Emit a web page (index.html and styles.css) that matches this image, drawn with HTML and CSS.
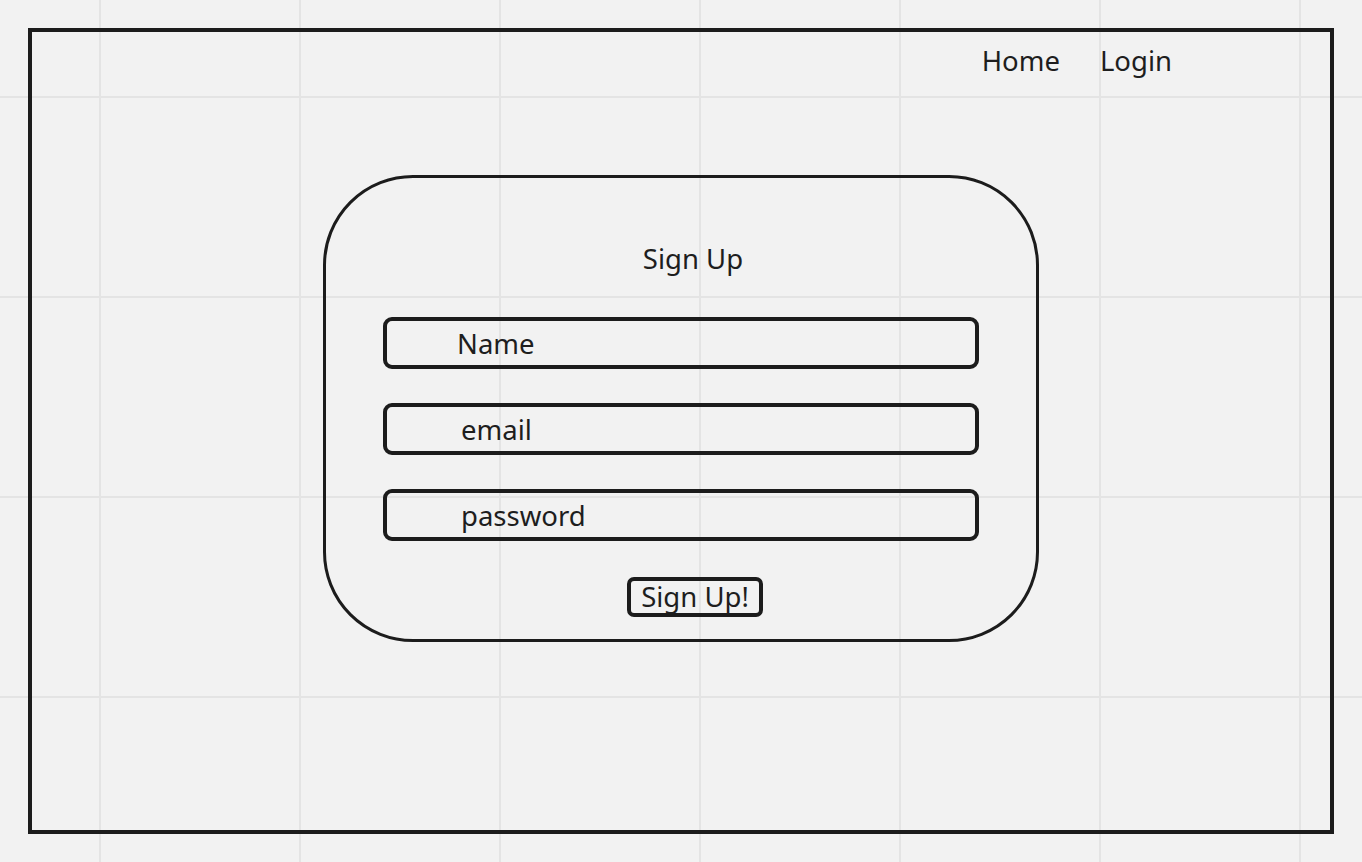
FILE: index.html
```html
<!DOCTYPE html>
<html lang="en">
<head>
    <meta charset="UTF-8">
    <meta name="viewport" content="width=device-width, initial-scale=1.0">
    <title>Sign Up</title>
    <link rel="stylesheet" href="styles.css">
</head>
<body>
    <div class="frame">
        <nav class="nav">
            <a href="#" class="nav-link">Home</a>
            <a href="#" class="nav-link">Login</a>
        </nav>

        <form class="card" onsubmit="return false;">
            <h1 class="card-title">Sign Up</h1>
            <input class="field" type="text" placeholder="Name">
            <input class="field field-wide" type="email" placeholder="email">
            <input class="field field-wide" type="password" placeholder="password">
            <button class="submit-btn" type="submit">Sign Up!</button>
        </form>
    </div>
</body>
</html>
```

FILE: styles.css
```css
* {
    margin: 0;
    padding: 0;
    box-sizing: border-box;
}

body {
    font-family: 'Noto Sans', 'Open Sans', sans-serif;
    color: #1e1e1e;
    background-color: #f2f2f2;
    /* whiteboard grid */
    background-image:
        linear-gradient(to right, #e4e4e4 2px, transparent 2px),
        linear-gradient(to bottom, #e4e4e4 2px, transparent 2px);
    background-size: 200px 200px;
    background-position: 99px 0, 0 96px;
    height: 100vh;
    overflow: hidden;
}

.frame {
    margin: 28px;
    height: 806px;
    border: 4px solid #1c1c1c;
}

.nav {
    display: flex;
    justify-content: flex-end;
    gap: 40px;
    padding: 9px 158px 0 0;
    height: 50px;
}

.nav-link {
    font-size: 27.5px;
    line-height: 40px;
    color: #1e1e1e;
    text-decoration: none;
}

.card {
    width: 716px;
    height: 467px;
    margin: 93px auto 0;
    padding-top: 61px;
    border: 3px solid #1c1c1c;
    border-radius: 90px;
    display: flex;
    flex-direction: column;
    align-items: center;
}

.card-title {
    font-size: 27.5px;
    font-weight: normal;
    line-height: 40px;
    margin-left: 24px;
    margin-bottom: 38px;
}

.field {
    width: 596px;
    height: 52px;
    border: 4px solid #1c1c1c;
    border-radius: 9px;
    background: transparent;
    padding-left: 70px;
    font-family: inherit;
    font-size: 27.5px;
    color: #1e1e1e;
    margin-bottom: 34px;
    outline: none;
}

.field-wide {
    padding-left: 74px;
}

.field::placeholder {
    color: #1e1e1e;
    opacity: 1;
}

.submit-btn {
    margin-top: 2px;
    margin-left: 28px;
    width: 136px;
    height: 40px;
    border: 4px solid #1c1c1c;
    border-radius: 7px;
    background: transparent;
    font-family: inherit;
    font-size: 27.5px;
    line-height: 30px;
    color: #1e1e1e;
    cursor: pointer;
}
```
